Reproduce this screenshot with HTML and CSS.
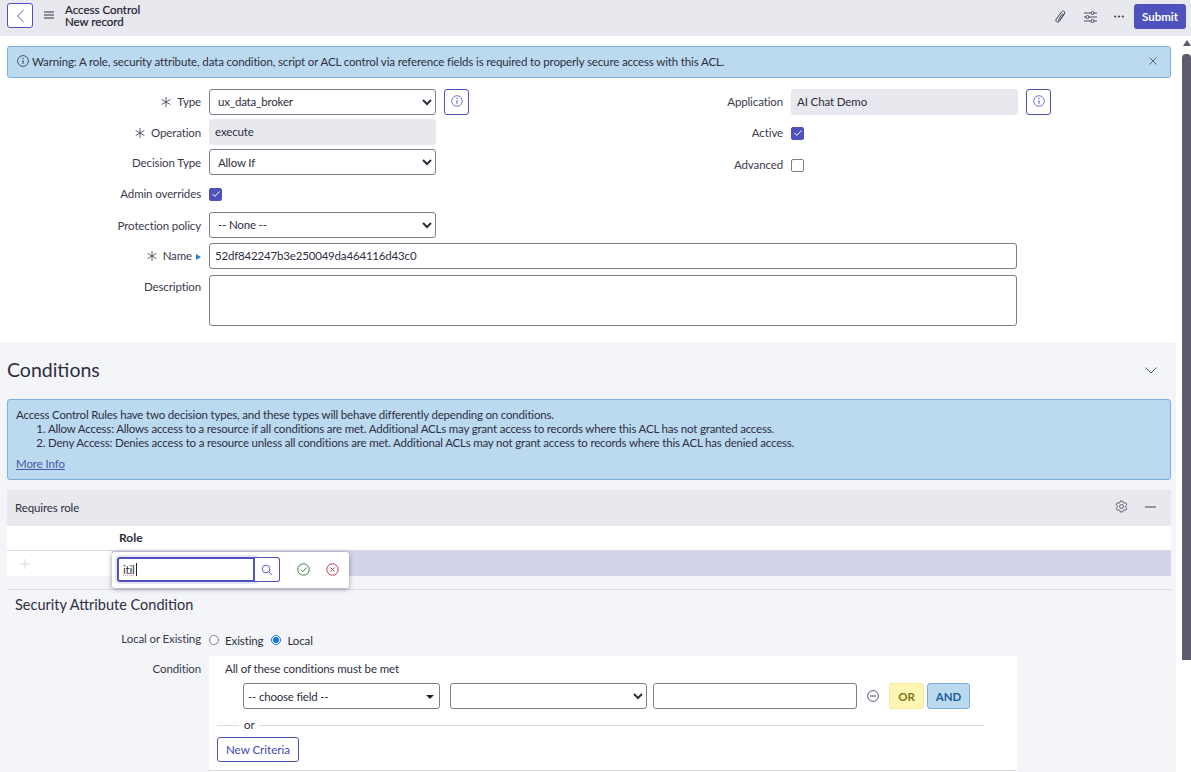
FILE: index.html
```html
<!DOCTYPE html>
<html lang="en">
<head>
<meta charset="utf-8">
<title>Access Control - New record</title>
<link rel="stylesheet" href="styles.css">
</head>
<body>
<div class="app">
  <header class="topbar">
    <button class="back" aria-label="Back"><svg width="9" height="14" viewBox="0 0 9 14"><path d="M7.500 1 1.500 7l6 6" fill="none" stroke="#4f52bd" stroke-width="1"/></svg></button>
    <svg class="menu" width="10" height="8" viewBox="0 0 10 8"><path d="M0 1h10M0 4h10M0 7h10" stroke="#2e2e3f" stroke-width="1"/></svg>
    <div class="title"><div>Access Control</div><div>New record</div></div>
    <div class="spacer"></div>
    <svg class="tool clip" width="12" height="14" viewBox="0 0 12 14"><path d="M9.600 3.200 4.600 11c-.8 1.200-2 1.500-2.900.9-.9-.6-1-1.800-.3-3L6.700 1.800C7.300 1 8.300.7 9.100 1.200c.8.500 1 1.500.5 2.300L4.900 10.300c-.3.500-.8.600-1.200.4-.4-.3-.4-.8-.1-1.300L7.700 3.600" fill="none" stroke="#3f4052" stroke-width="1"/></svg>
    <svg class="tool sliders" width="13" height="12" viewBox="0 0 13 12"><path d="M0 2h13M0 6h13M0 10h13" stroke="#3f4052" stroke-width=".9"/><circle cx="8.500" cy="2" r="1.500" fill="#e8e9ee" stroke="#3f4052" stroke-width=".9"/><circle cx="3.500" cy="6" r="1.500" fill="#e8e9ee" stroke="#3f4052" stroke-width=".9"/><circle cx="8.500" cy="10" r="1.500" fill="#e8e9ee" stroke="#3f4052" stroke-width=".9"/></svg>
    <svg class="tool dots" width="10" height="3" viewBox="0 0 10 3"><circle cx="1.200" cy="1.500" r="1.100" fill="#3f4052"/><circle cx="5" cy="1.500" r="1.100" fill="#3f4052"/><circle cx="8.800" cy="1.500" r="1.100" fill="#3f4052"/></svg>
    <button class="submit">Submit</button>
  </header>
  <div class="main">
    <div class="page">
      <section class="form-area">
        <div class="alert alert-top">
          <svg class="alert-info" width="12" height="12" viewBox="0 0 12 12"><circle cx="6" cy="6" r="5.400" fill="none" stroke="#2e2e3f" stroke-width=".8"/><path d="M6 5.200v3.600" stroke="#2e2e3f"/><circle cx="6" cy="3.400" r=".6" fill="#2e2e3f"/></svg>
          <span class="alert-text">Warning: A role, security attribute, data condition, script or ACL control via reference fields is required to properly secure access with this ACL.</span>
          <svg class="alert-close" width="8" height="8" viewBox="0 0 8 8"><path d="M.5.500l7 7M7.500.500l-7 7" stroke="#4b5a73" stroke-width=".9"/></svg>
        </div>

        <div class="columns">
          <div class="col-left">
            <div class="row r-type">
              <label class="lbl"><svg class="req" width="10" height="10" viewBox="0 0 10 10"><path d="M5 0v10M.7 2.500l8.600 5M.7 7.500l8.600-5" stroke="#4a4a5c" stroke-width=".9"/></svg>Type</label>
              <select class="sel"><option>ux_data_broker</option></select>
              <button class="info"><svg width="12" height="12" viewBox="0 0 12 12"><circle cx="6" cy="6" r="5.300" fill="none" stroke="#4f52bd" stroke-width=".8"/><path d="M6 5.200v3.600" stroke="#4f52bd"/><circle cx="6" cy="3.400" r=".6" fill="#4f52bd"/></svg></button>
            </div>
            <div class="row r-op">
              <label class="lbl lbl-low"><svg class="req" width="10" height="10" viewBox="0 0 10 10"><path d="M5 0v10M.7 2.500l8.600 5M.7 7.500l8.600-5" stroke="#4a4a5c" stroke-width=".9"/></svg>Operation</label>
              <div class="readonly ro-op">execute</div>
            </div>
            <div class="row r-dec">
              <label class="lbl lbl-low">Decision Type</label>
              <select class="sel sel-low"><option>Allow If</option></select>
            </div>
            <div class="row r-admin">
              <label class="lbl">Admin overrides</label>
              <span class="check on"><svg width="10" height="8" viewBox="0 0 10 8"><path d="M1.500 4l2.300 2.300L8.500 1.500" fill="none" stroke="#fff" stroke-width="1"/></svg></span>
            </div>
            <div class="row r-prot">
              <label class="lbl lbl-low">Protection policy</label>
              <select class="sel"><option>-- None --</option></select>
            </div>
          </div>
          <div class="col-right">
            <div class="row r-app">
              <label class="lbl">Application</label>
              <div class="readonly ro-app">AI Chat Demo</div>
              <button class="info"><svg width="12" height="12" viewBox="0 0 12 12"><circle cx="6" cy="6" r="5.300" fill="none" stroke="#4f52bd" stroke-width=".8"/><path d="M6 5.200v3.600" stroke="#4f52bd"/><circle cx="6" cy="3.400" r=".6" fill="#4f52bd"/></svg></button>
            </div>
            <div class="row r-active">
              <label class="lbl">Active</label>
              <span class="check on"><svg width="10" height="8" viewBox="0 0 10 8"><path d="M1.500 4l2.300 2.300L8.500 1.500" fill="none" stroke="#fff" stroke-width="1"/></svg></span>
            </div>
            <div class="row r-adv">
              <label class="lbl">Advanced</label>
              <span class="check"></span>
            </div>
          </div>
        </div>
        <div class="row r-name">
          <label class="lbl"><svg class="req" width="10" height="10" viewBox="0 0 10 10"><path d="M5 0v10M.7 2.500l8.600 5M.7 7.500l8.600-5" stroke="#4a4a5c" stroke-width=".9"/></svg>Name<span class="tri"></span></label>
          <input class="txt" value="52df842247b3e250049da464116d43c0">
        </div>
        <div class="row r-desc">
          <label class="lbl">Description</label>
          <textarea class="area"></textarea>
        </div>
      </section>

      <section class="conditions">
        <div class="cond-head">
          <h2>Conditions</h2>
          <svg width="12" height="7" viewBox="0 0 12 7"><path d="M.5.500 6 6 11.500.500" fill="none" stroke="#3f4a63" stroke-width=".9"/></svg>
        </div>
        <div class="alert alert-rules">
          <p>Access Control Rules have two decision types, and these types will behave differently depending on conditions.</p>
          <ol>
            <li>Allow Access: Allows access to a resource if all conditions are met. Additional ACLs may grant access to records where this ACL has not granted access.</li>
            <li>Deny Access: Denies access to a resource unless all conditions are met. Additional ACLs may not grant access to records where this ACL has denied access.</li>
          </ol>
          <a class="more" href="#">More Info</a>
        </div>

        <div class="list-head">
          <span>Requires role</span>
          <svg class="gear" width="13" height="13" viewBox="0 0 13 13"><path d="M5.300 1h2.400l.3 1.500 1.200.7 1.500-.5 1.200 2-1.200 1.100v1.400l1.200 1.100-1.200 2-1.500-.5-1.200.7-.3 1.500H5.300L5 10.500l-1.200-.7-1.500.5-1.200-2 1.200-1.100V5.800L1.100 4.700l1.200-2 1.500.5L5 2.500z" fill="none" stroke="#3f4052" stroke-width=".8"/><circle cx="6.500" cy="6.500" r="2" fill="none" stroke="#3f4052" stroke-width=".8"/></svg>
          <svg class="minus" width="11" height="2" viewBox="0 0 11 2"><path d="M0 1h11" stroke="#3f4052"/></svg>
        </div>
        <div class="list-cols"><span>Role</span></div>
        <div class="list-row">
          <div class="plus-cell"><svg width="10" height="10" viewBox="0 0 10 10"><path d="M5 0v10M0 5h10" stroke="#d9dae3"/></svg></div>
          <div class="sel-cell"></div>
          <div class="popover">
            <div class="pop-field"><input class="pop-input" value="itil" spellcheck="false"><span class="pop-caret"></span></div>
            <button class="pop-search"><svg width="12" height="12" viewBox="0 0 12 12"><circle cx="5" cy="5" r="3.800" fill="none" stroke="#4f52bd" stroke-width=".9"/><path d="m7.800 7.800 3.400 3.400" stroke="#4f52bd" stroke-width=".9"/></svg></button>
            <svg class="pop-ok" width="13" height="13" viewBox="0 0 13 13"><circle cx="6.500" cy="6.500" r="5.700" fill="none" stroke="#2f6b3a" stroke-width=".9"/><path d="m3.800 6.700 2 2 3.600-4" fill="none" stroke="#2f6b3a" stroke-width=".9"/></svg>
            <svg class="pop-no" width="13" height="13" viewBox="0 0 13 13"><circle cx="6.500" cy="6.500" r="5.700" fill="none" stroke="#b5263c" stroke-width=".9"/><path d="m4.500 4.500 4 4m0-4-4 4" stroke="#b5263c" stroke-width=".9"/></svg>
          </div>
        </div>

        <div class="sec-attr">
          <h3>Security Attribute Condition</h3>
          <div class="row r-local">
            <label class="lbl">Local or Existing</label>
            <span class="radio"></span><span class="radio-text">Existing</span>
            <span class="radio on"></span><span class="radio-text">Local</span>
          </div>
          <div class="row r-cond">
            <label class="lbl lbl-cond">Condition</label>
            <div class="builder">
              <div class="met">All of these conditions must be met</div>
              <div class="crit">
                <div class="field"><select class="plain"><option>-- choose field --</option></select><span class="caret"></span></div>
                <select class="sel op"><option></option></select>
                <input class="txt val">
                <svg class="rem" width="12" height="12" viewBox="0 0 12 12"><circle cx="6" cy="6" r="5.400" fill="none" stroke="#3f4a63" stroke-width=".9"/><path d="M3 6h6" stroke="#3f4a63"/></svg>
                <button class="btn-or">OR</button>
                <button class="btn-and">AND</button>
              </div>
              <div class="or-line"><span>or</span></div>
              <button class="new-crit">New Criteria</button>
              <div class="builder-end"></div>
            </div>
          </div>
        </div>
      </section>
    </div>
    <div class="scrollbar">
      <span class="sb-up"></span>
      <span class="sb-thumb"></span>
    </div>
  </div>
</div>
</body>
</html>
```
FILE: styles.css
```css
* { box-sizing: border-box; }
html, body { margin: 0; height: 772px; overflow: hidden; }
body { font-family: Lato, "Open Sans", sans-serif; font-size: 11.500px; letter-spacing: -0.12px; color: #2e2e3f; background: #fff; }
button, input, select, textarea { font-family: inherit; font-size: 11.500px; letter-spacing: -0.18px; color: #2e2e3f; }
.app { height: 772px; display: flex; flex-direction: column; }
.main { flex: 1; display: flex; min-height: 0; }
.page { flex: 1; min-width: 0; }
.scrollbar { width: 15px; background: #fff; flex: none; padding: 4px 0 0 6px; display: flex; flex-direction: column; align-items: center; }
.sb-up { width: 0; height: 0; border-left: 4px solid transparent; border-right: 4px solid transparent; border-bottom: 6px solid #5d5b6e; }
.sb-thumb { width: 9px; height: 606px; margin-top: 8px; background: #5d5b6e; border-radius: 4px 4px 0 0; }

.topbar { height: 36px; flex: none; background: #e8e9ee; display: flex; align-items: center; padding: 0 5px 0 7px; }
.back { width: 26px; height: 25px; margin-top: -5px; background: #fff; border: 1px solid #4f52bd; border-radius: 3px; display: flex; align-items: center; justify-content: center; padding: 0; }
.menu { margin-left: 11px; margin-top: -6px; }
.title { margin-left: 11px; margin-top: -5px; line-height: 12px; font-size: 11.500px; letter-spacing: 0; color: #1f2030; -webkit-text-stroke: .2px #1f2030; }
.spacer { flex: 1; }
.tool { flex: none; }
.clip { margin-top: -3px; }
.sliders { margin-left: 17px; margin-top: -3px; }
.dots { margin-left: 17px; margin-top: -3px; }
.submit { width: 52px; height: 25px; margin: -3px 0 0 10px; background: #4f52bd; color: #fff; border: 0; border-radius: 3px; font-weight: 700; padding: 0; letter-spacing: 0; }

.form-area { height: 306px; padding: 10px 0 0 7px; background: #fff; }
.alert { background: #bbdaf0; border: 1px solid #7bb0df; border-radius: 3px; }
.alert-top { width: 1164px; height: 32px; display: flex; align-items: center; padding: 0 13px 2px 9px; letter-spacing: -0.135px; }
.alert-info { flex: none; margin-right: 3px; }
.alert-text { flex: 1; }
.columns { display: flex; margin-top: 11px; }
.col-left { width: 617px; }
.col-right { flex: 1; }
.row { display: flex; align-items: center; }
.lbl { width: 194px; flex: none; margin-right: 8px; padding-bottom: 1px; text-align: right; color: #3a3a4c; display: block; }
.lbl-low { padding: 1px 0 0; }
.req { margin-right: 6px; vertical-align: -1px; }
.col-right .lbl { width: 159px; }
.sel { width: 227px; height: 26px; background: #fff; border: 1px solid #7d7e8c; border-radius: 3px; padding: 0 0 1px 4px; outline: 0; }
.sel-low { padding-bottom: 0; }
.info { width: 25px; height: 26px; background: #fff; border: 1px solid #4f52bd; border-radius: 3px; margin-left: 8px; padding: 0 0 2px; display: flex; align-items: center; justify-content: center; }
.readonly { height: 26px; background: #e8e9ee; border-radius: 3px; padding: 0 6px 1px; display: flex; align-items: center; }
.ro-op { width: 227px; }
.ro-app { width: 227px; }
.r-type { height: 26px; }
.r-op { height: 26px; margin-top: 4px; }
.r-dec { height: 26px; margin-top: 4px; }
.r-admin { height: 14px; margin-top: 12px; }
.r-prot { height: 26px; margin-top: 11px; }
.r-app { height: 26px; }
.r-active { height: 14px; margin-top: 11px; }
.r-adv { height: 14px; margin-top: 18px; }
.check { width: 13px; height: 13px; border: 1px solid #7d7e8c; border-radius: 2px; background: #fff; display: flex; align-items: center; justify-content: center; }
.check.on { background: #4f52bd; border-color: #4f52bd; }
.r-name { height: 26px; margin-top: 5px; }
.tri { display: inline-block; width: 0; height: 0; margin-left: 4px; border-top: 3.500px solid transparent; border-bottom: 3.500px solid transparent; border-left: 5px solid #2a7ac9; }
.txt { height: 26px; border: 1px solid #7d7e8c; border-radius: 3px; background: #fff; padding: 0 5px 1px; outline: 0; }
.r-name .txt { width: 808px; }
.r-desc { margin-top: 6px; align-items: flex-start; }
.r-desc .lbl { padding-top: 5px; }
.area { width: 808px; height: 51px; border: 1px solid #7d7e8c; border-radius: 3px; resize: none; outline: 0; display: block; }

.conditions { background: #f4f5f8; height: 430px; padding: 0 0 0 7px; overflow: hidden; }
.cond-head { height: 57px; width: 1150px; display: flex; align-items: center; justify-content: space-between; }
.cond-head h2 { margin: -3px 0 0; font-size: 19.500px; font-weight: 400; letter-spacing: 0; color: #2e2e3f; }
.alert-rules { width: 1164px; height: 81px; padding: 8px 8px 0; line-height: 14px; letter-spacing: -0.19px; }
.alert-rules p { margin: 0; }
.alert-rules ol { margin: 0; padding-left: 32px; }
.more { display: block; margin-top: 7px; color: #4a55a8; letter-spacing: -0.1px; }
.list-head { margin-top: 10px; width: 1164px; height: 36px; background: #e8e9ee; display: flex; align-items: center; padding: 0 15px 2px 8px; }
.list-head span { flex: 1; }
.gear { margin-right: 17px; margin-top: -2px; }
.list-cols { width: 1164px; height: 25px; background: #fff; border-bottom: 1px solid #d9dae3; padding: 0 0 2px 112px; display: flex; align-items: center; font-weight: 700; font-size: 12px; letter-spacing: 0; }
.list-row { width: 1164px; height: 25px; display: flex; position: relative; }
.plus-cell { width: 105px; background: #fff; padding: 7px 0 0 13px; }
.sel-cell { flex: 1; background: #d3d3ec; }
.popover { position: absolute; left: 105px; top: 1px; width: 237px; height: 36px; background: #fff; border-radius: 3px; box-shadow: 0 1px 5px rgba(30, 30, 60, .45); display: flex; align-items: center; padding: 0 0 1px 5px; }
.pop-field { position: relative; display: flex; }
.pop-input { width: 138px; height: 25px; border: 2px solid #4f52bd; border-radius: 3px 0 0 3px; padding: 0 3px 0 4px; outline: 0; box-shadow: 0 0 0 2px #e5e6f6; text-decoration: underline dotted #e0a0a0; }
.pop-caret { position: absolute; left: 19px; top: 6px; width: 1px; height: 13px; background: #1f2030; }
.pop-search { width: 25px; height: 25px; border: 1px solid #4f52bd; border-left: 0; border-radius: 0 3px 3px 0; background: #fff; padding: 0; display: flex; align-items: center; justify-content: center; position: relative; }
.pop-ok { margin-left: 17px; }
.pop-no { margin-left: 16px; }
.sec-attr { width: 1164px; margin-top: 13px; border-top: 1px solid #d9dae3; }
.sec-attr h3 { margin: 6px 0 0 8px; font-size: 14.500px; font-weight: 400; line-height: 17px; letter-spacing: 0; color: #2e2e3f; }
.r-local { margin-top: 18px; height: 16px; }
.radio { width: 10px; height: 10px; border: 1px solid #7d7e8c; border-radius: 50%; background: #fff; flex: none; margin-top: 2px; }
.radio.on { border: 1px solid #1a73e8; background: radial-gradient(circle, #1a73e8 0 2.800px, #fff 3.200px); }
.radio-text { margin: 2px 8px 0 6px; }
.r-cond { margin-top: 9px; align-items: flex-start; }
.lbl-cond { padding-top: 6px; }
.builder { width: 808px; height: 120px; background: #fff; padding: 6px 0 0 16px; }
.met { line-height: 14px; }
.crit { display: flex; align-items: center; margin: 7px 0 0 18px; height: 26px; }
.field { position: relative; width: 197px; height: 26px; }
.plain { width: 197px; height: 26px; appearance: none; background: #fff; border: 1px solid #7d7e8c; border-radius: 3px; padding: 1px 0 0 4px; outline: 0; letter-spacing: -0.2px; }
.caret { position: absolute; right: 6px; top: 12px; border-left: 4px solid transparent; border-right: 4px solid transparent; border-top: 4px solid #1f2030; }
.op { width: 197px; margin-left: 10px; }
.val { width: 204px; margin-left: 6px; }
.rem { margin-left: 10px; }
.btn-or, .btn-and { height: 26px; border-radius: 3px; font-weight: 700; padding: 1px 0 0; letter-spacing: 0; }
.btn-or { width: 35px; margin-left: 10px; background: #fdf6b4; border: 1px solid #f3eb9c; color: #7e7420; }
.btn-and { width: 43px; margin-left: 3px; background: #bbdaf0; border: 1px solid #7bb0df; color: #1f5e9e; }
.or-line { display: flex; align-items: center; width: 767px; margin: 9px 0 0 -8px; height: 14px; }
.or-line::before { content: ""; width: 22px; height: 1px; background: #d9dae3; }
.or-line::after { content: ""; flex: 1; height: 1px; background: #d9dae3; }
.or-line span { margin: -2px 5px 0; }
.new-crit { display: block; width: 82px; height: 25px; margin: 5px 0 0 -8px; background: #fff; border: 1px solid #4f52bd; border-radius: 3px; color: #4f52bd; padding: 0; font-weight: 500; letter-spacing: 0; }
.builder-end { height: 1px; width: 808px; margin: 8px 0 0 -16px; background: #d9dae3; }
```
